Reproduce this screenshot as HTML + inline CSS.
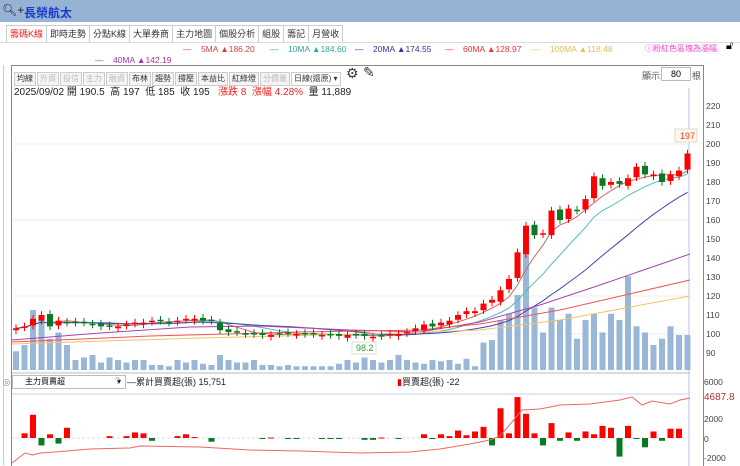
<!DOCTYPE html><html><head><meta charset="utf-8"><style>
body{margin:0;width:740px;height:466px;overflow:hidden;background:#fff;font-family:"Liberation Sans","Noto Sans CJK TC",sans-serif;position:relative}
.a{position:absolute;white-space:nowrap}
.top{left:0;top:0;width:740px;height:22px;background:#96b3d6}
.tabs span{display:inline-block;border:1px solid #ccc;border-bottom:none;height:17px;line-height:17px;padding:0 3px;font-size:9px;color:#333;margin-right:-1px;background:#fff}
.tb span{display:inline-block;border:1px solid #ccc;height:12px;line-height:12px;padding:0 2px;font-size:8px;color:#333;margin-right:1px;background:#f4f4f4}
.tb span.d{color:#bbb}
.ma{font-size:8.5px}
</style></head><body>
<div class="a top"></div>
<div class="a" style="left:2px;top:3px;font-size:12px;color:#222">🔍︎+</div>
<div class="a" style="left:24px;top:4px;font-size:12px;color:#1a3cc8;font-weight:bold">長榮航太</div>
<div class="a tabs" style="left:6px;top:24px"><span style="color:#e22">籌碼K線</span><span>即時走勢</span><span>分點K線</span><span>大單券商</span><span>主力地圖</span><span>個股分析</span><span>組股</span><span>籌記</span><span>月營收</span></div>
<div class="a" style="left:0;top:42px;width:740px;border-top:1px solid #ddd"></div>
<div class="a ma" style="left:183px;top:44px;color:#c44">—&nbsp;&nbsp;&nbsp;&nbsp;5MA ▲186.20</div>
<div class="a ma" style="left:270px;top:44px;color:#3a9">—&nbsp;&nbsp;&nbsp;&nbsp;10MA ▲184.60</div>
<div class="a ma" style="left:355px;top:44px;color:#339">—&nbsp;&nbsp;&nbsp;&nbsp;20MA ▲174.55</div>
<div class="a ma" style="left:445px;top:44px;color:#e33">—&nbsp;&nbsp;&nbsp;&nbsp;60MA ▲128.97</div>
<div class="a ma" style="left:532px;top:44px;color:#eb5">—&nbsp;&nbsp;&nbsp;&nbsp;100MA ▲118.48</div>
<div class="a ma" style="left:645px;top:43px;color:#e4c;font-size:8px">ⓘ粉紅色區塊為漲幅</div>
<div class="a" style="left:726px;top:40px;font-size:11px">🔓︎</div>
<div class="a ma" style="left:95px;top:55px;color:#a3a">—&nbsp;&nbsp;&nbsp;&nbsp;40MA ▲142.19</div>
<div class="a" style="left:11px;top:65px;width:691px;height:400px;border:1px solid #888;border-bottom:none"></div>
<div class="a" style="left:3px;top:65px;height:400px;border-left:1px solid #ccc"></div>
<div class="a tb" style="left:14px;top:68px"><span>均線</span><span class="d">外資</span><span class="d">投信</span><span class="d">主力</span><span class="d">融資</span><span>布林</span><span>趨勢</span><span>撐壓</span><span>本益比</span><span>紅綠燈</span><span class="d">分價量</span><span style="background:#fff;width:44px">日線(還原) ▾</span></div>
<div class="a" style="left:346px;top:65px;font-size:14px;color:#333">⚙</div>
<div class="a" style="left:363px;top:64px;font-size:14px;color:#333">✎</div>
<div class="a" style="left:642px;top:69px;font-size:9px;color:#555">顯示:</div>
<div class="a" style="left:661px;top:67px;width:28px;height:12px;border:1px solid #bbb;font-size:9px;text-align:center;line-height:12px">80</div>
<div class="a" style="left:692px;top:69px;font-size:9px;color:#555">根</div>
<div class="a" style="left:14px;top:83px;font-size:10px;color:#222">2025/09/02 開 190.5&nbsp; 高 197&nbsp; 低 185&nbsp; 收 195&nbsp;&nbsp; <span style="color:#e22">漲跌 8&nbsp; 漲幅 4.28%</span>&nbsp; 量 11,889</div>
<div class="a" style="left:12px;top:375px;width:100px;height:12px;border:1px solid #bbb;font-size:8px;line-height:12px;padding-left:12px">主力買賣超<span style="float:right;margin-right:4px">▾</span></div>
<div class="a" style="left:2px;top:376px;font-size:9px;color:#999">⊗</div>
<div class="a" style="left:115px;top:376px;font-size:9px;color:#999">?</div>
<div class="a" style="left:127px;top:375px;font-size:9px;color:#222">—累計買賣超(張) 15,751</div>
<div class="a" style="left:397px;top:375px;font-size:9px;color:#222"><span style="color:#e00">▮</span>買賣超(張) -22</div>
<svg id="s" class="a" style="left:0;top:0" width="740" height="466"></svg>
<script>
var C=[103,104,108,110,104,107,106,106,106,105,104,104,104,105,106,106,107,107,106,107,108,108,107,107,102,101,101,100,100,99.5,99.5,100,100.5,100,100,100,99.5,99.5,99,99.5,99.5,99,98.5,99,100,100,101,103,105,104,106,107,110,112,112,116,118,123,129,143,157,152,153,165,160,166,165,171,183,178,180,179,182,188,184,184,180,184,186,195];
var V=[15,20,48,40,25,30,20,8,10,12,6,10,8,6,8,8,4,4,3,8,6,8,5,4,12,8,6,6,8,4,4,3,4,3,3,3,3,3,5,8,6,10,8,6,8,12,8,6,5,8,7,8,5,9,3,22,24,40,45,60,100,50,30,50,40,45,25,40,45,30,45,40,75,35,30,20,25,35,28,28];
var B=[0,500,2500,-800,400,-600,1100,0,0,0,0,200,0,200,600,500,-300,0,0,200,400,100,0,-400,0,0,0,0,0,-50,50,0,-100,-100,0,0,-50,-50,-100,0,0,-200,-200,50,0,-50,0,0,400,-100,400,200,800,300,700,1200,-800,3200,500,4400,2600,500,-800,1600,-300,600,-300,700,400,1300,1100,-2000,1300,-100,-1000,700,-300,1000,1000,0];
function y(p){return 144+(200-p)*1.9}function X(i){return 16+8.5*i}
var s='';
[220,210,200,190,180,170,160,150,140,130,120,110,100,90].forEach(function(p){s+='<text x="706" y="'+(y(p)+3)+'" font-size="8.5" fill="#444">'+p+'</text>';if(p%40==0||p==100)s+='<line x1="12" x2="690" y1="'+y(p)+'" y2="'+y(p)+'" stroke="#eee"/>'});
s+='<line x1="689" x2="689" y1="88" y2="466" stroke="#b8c4ee"/>';
for(var i=0;i<80;i++){var h=V[i]*1.25;s+='<rect x="'+(X(i)-3)+'" y="'+(370-h)+'" width="6" height="'+h+'" fill="#9ab7d8"/>';}
function ma(n,col){var d='';for(var i=0;i<80;i++){var a=0,c=0;for(var j=Math.max(0,i-n+1);j<=i;j++){a+=C[j];c++}var v=a/c;d+=(i?'L':'M')+X(i)+' '+y(v).toFixed(1)}s+='<path d="'+d+'" fill="none" stroke="'+col+'" stroke-width="1"/>'}
ma(5,'#c66');ma(10,'#5bb');ma(20,'#44a');
function pl(pts,col){s+='<polyline points="'+pts+'" fill="none" stroke="'+col+'"/>'}
pl('12,340 100,333 190,327 260,326 350,330 420,332 480,322 540,305 600,285 690,254','#a4a');
pl('12,342 150,336 300,332 420,330 480,324 560,310 690,280','#e55');
pl('12,344 200,338 400,333 480,330 560,320 690,296','#f3c26a');
for(var i=0;i<80;i++){var c=C[i],o=i?C[i-1]+(i%3==0?-1:0.5):102;if(Math.abs(c-o)<0.3)o=c+0.4;var up=c>=o,col=up?'#f00':'#0a7a22';var t=y(Math.max(o,c)),b=y(Math.min(o,c));var hi=Math.max(o,c)+2,lo=Math.min(o,c)-2;s+='<line x1="'+X(i)+'" x2="'+X(i)+'" y1="'+y(hi)+'" y2="'+y(lo)+'" stroke="'+col+'"/><rect x="'+(X(i)-3)+'" y="'+t+'" width="6" height="'+Math.max(1.5,b-t)+'" fill="'+col+'"/>'}
s+='<rect x="675" y="129" width="22" height="13" fill="#fff8e8" stroke="#ddc"/><text x="680" y="139" font-size="9" fill="#e33">197</text>';
s+='<rect x="352" y="342" width="24" height="12" fill="#fff" stroke="#ddd"/><text x="356" y="351" font-size="9" fill="#393">98.2</text>';
s+='<line x1="12" x2="690" y1="373" y2="373" stroke="#bbb"/><line x1="12" x2="690" y1="394" y2="394" stroke="#c8d0f0"/><line x1="12" x2="690" y1="438" y2="438" stroke="#ddd" stroke-dasharray="3,2"/>';
[[6000,382],[2000,419],[0,439],[-2000,458]].forEach(function(a){s+='<text x="704" y="'+(a[1]+3)+'" font-size="8.5" fill="#444">'+a[0]+'</text>'});
s+='<text x="704" y="400" font-size="10" fill="#a33">4687.8</text>';
for(var i=0;i<80;i++){var v=B[i],h=Math.abs(v)*0.0093;if(!v)continue;s+='<rect x="'+(X(i)-3)+'" y="'+(v>0?438-h:438)+'" width="6" height="'+Math.max(1,h)+'" fill="'+(v>0?'#f00':'#0a7a22')+'"/>'}
pl('12,463 25,453 33,455 40,453 55,452 90,449 130,448 140,446 200,447 250,450 300,451 360,453 410,452 440,449 470,444 490,440 500,436 512,422 522,410 540,409 560,405 590,404 620,400 632,397 642,405 652,401 670,404 680,400 690,398','#e66');
document.getElementById('s').innerHTML=s;
</script>
</body></html>
